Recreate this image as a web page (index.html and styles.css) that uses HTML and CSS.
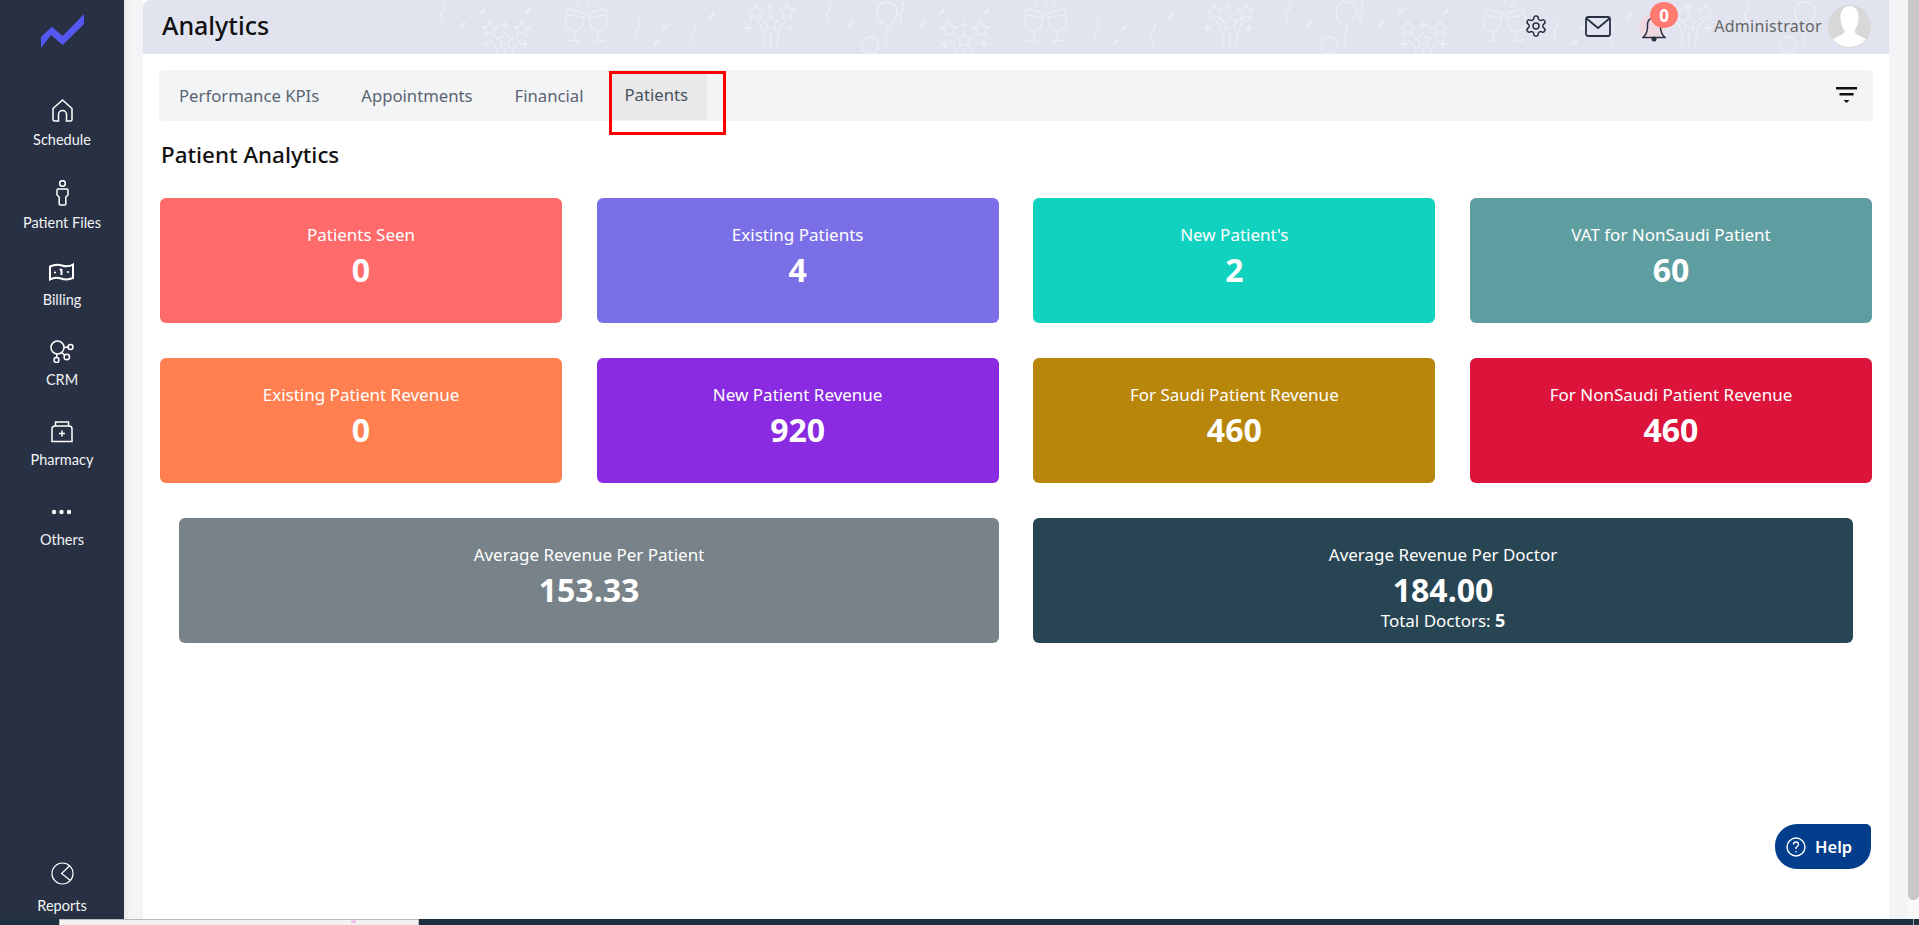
FILE: index.html
```html
<!DOCTYPE html>
<html lang="en">
  <head>
    <meta charset="UTF-8" />
    <meta name="viewport" content="width=device-width, initial-scale=1.0" />
    <title>Analytics</title>
    <link rel="stylesheet" href="styles.css">
  </head>
  <body>
    <div class="page">
      <!-- sidebar -->
      <aside class="sidebar">
        <svg class="logo" viewBox="0 0 43 34" width="43" height="34">
          <path d="M0 23 L10.700 12.700 L21.700 22 L43 0 V10 L21.700 31 L10 21 L0 34 Z" fill="#5558f0" />
        </svg>
        <nav class="side-nav">
          <a class="side-item schedule">
            <svg viewBox="0 0 21 23" width="21" height="23"><path d="M1 9.500 L10.500 1 L20 9.500 V20.500 Q20 22 18.500 22 H14.500 V15.500 A4 4 0 0 0 6.500 15.500 V22 H2.500 Q1 22 1 20.500 Z" /></svg>
            <span>Schedule</span>
          </a>
          <a class="side-item files">
            <svg viewBox="0 0 13 26" width="13" height="26"><circle cx="6.500" cy="3.500" r="2.800" /><path d="M2 9 H11 Q12 9 12 10.500 V15 L9.800 17 V24 Q9.800 25 8.800 25 H4.200 Q3.200 25 3.200 24 V17 L1 15 V10.500 Q1 9 2 9 Z" /></svg>
            <span>Patient Files</span>
          </a>
          <a class="side-item billing">
            <svg class="thick" viewBox="0 0 25 18" width="25" height="18"><path d="M1 3.500 Q7 .5 13 2.500 T24 1.500 V15 Q18 17.500 12 15.500 T1 16.500 Z" /><path d="M12.500 6 L10.800 7.300 M12.500 6 V12" /><circle class="solid" cx="6" cy="9.500" r="1.100" /><circle class="solid" cx="19" cy="9" r="1.100" /></svg>
            <span>Billing</span>
          </a>
          <a class="side-item crm">
            <svg viewBox="0 0 24 23" width="24" height="23"><circle cx="7.500" cy="7.500" r="6.500" /><circle cx="20.500" cy="7" r="2.500" /><circle cx="16.800" cy="17" r="2.700" /><circle cx="6.500" cy="20" r="2.500" /><path d="M14 7.500 L18 7 M11.500 12.500 L14.800 15.200 M7 14 L6.500 17.500" /></svg>
            <span>CRM</span>
          </a>
          <a class="side-item pharmacy">
            <svg viewBox="0 0 22 22" width="22" height="22"><path d="M4.500 5 V1 H17.500 V5" /><path d="M4 5 H18 Q21 5 21 8 V20.500 H1 V8 Q1 5 4 5 Z" /><path d="M11 9.500 V15.500 M8 12.500 H14" /></svg>
            <span>Pharmacy</span>
          </a>
          <a class="side-item others">
            <svg viewBox="0 0 21 6" width="21" height="6"><circle class="solid" cx="3" cy="3" r="2.200" /><circle class="solid" cx="10.500" cy="3" r="2.200" /><circle class="solid" cx="18" cy="3" r="2.200" /></svg>
            <span>Others</span>
          </a>
        </nav>
        <a class="side-item reports">
          <svg class="thin" viewBox="0 0 24 24" width="23" height="23"><circle cx="12" cy="12" r="11" /><path d="M19.500 3.900 L11 12 L20.300 19.300" /></svg>
          <span>Reports</span>
        </a>
      </aside>

      <main class="content">
        <header class="topbar">
          <h1>Analytics</h1>
          <svg class="confetti" width="1459" height="54" viewBox="0 0 1459 54">
            <defs>
              <path id="star" d="M0 -8 L2.400 -2.600 L8 -2.200 L3.800 1.400 L5 7 L0 4 L-5 7 L-3.800 1.400 L-8 -2.200 L-2.400 -2.600 Z" />
              <path id="leaf" class="leaf" d="M-3 3 Q-3 -2 2.500 -4 Q3.500 1 -3 3 Z" />
              <path id="squiggle" d="M1 0 Q5 4 1 9 Q-3 13 0 17 L1 22" />
              <path id="plus" d="M-4 0 H4 M0 -4 V4" />
              <g id="party">
                <use href="#squiggle" x="12" y="2" />
                <use href="#leaf" x="53" y="12" />
                <use href="#leaf" x="33" y="25" />
                <use href="#leaf" x="98" y="12" />
                <use href="#star" x="60" y="29" />
                <use href="#star" x="92" y="29" />
                <use href="#star" x="75" y="40" />
                <use href="#plus" x="56" y="44" />
                <use href="#plus" x="75" y="25" />
                <use href="#plus" x="95" y="44" />
                <path d="M60 40 Q67 46 68 54 M75 48 V54 M91 40 Q84 46 82 54" />
                <!-- glasses -->
                <path d="M138 9 L155 13 L152 26 Q149 33 142 31 Q135 29 135 22 Z M139 15 L154 18 M146 32 L144 41 M137 40 L150 42" />
                <path d="M158 13 L175 9 L178 22 Q178 29 171 31 Q164 33 161 26 Z M159 18 L174 15 M167 32 L169 41 M163 42 L176 40" />
                <path d="M150 5 L146 1 M157 4 V0 M163 5 L167 1" />
                <use href="#squiggle" x="207" y="20" />
                <use href="#leaf" x="235" y="28" />
                <use href="#leaf" x="227" y="43" />
                <use href="#leaf" x="282" y="16" />
                <use href="#squiggle" x="263" y="22" />
                <use href="#star" x="326" y="12" />
                <use href="#star" x="357" y="12" />
                <use href="#star" x="341" y="23" />
                <use href="#plus" x="340" y="7" />
                <use href="#plus" x="318" y="28" />
                <use href="#plus" x="360" y="28" />
                <path d="M326 20 Q336 28 334 46 M341 32 V50 M356 20 Q347 28 347 46" />
                <use href="#squiggle" x="398" y="2" />
                <use href="#leaf" x="420" y="25" />
                <!-- balloons -->
                <path d="M457 2 C465 2 468 8 467 13 C466 20 461 24 457 26 C452 24 447 20 447 13 C447 7 450 2 457 2 Z M457 26 C461 31 453 34 456 38 Q458 42 455 46" />
                <path d="M440 37 C446 37 449 42 448 47 C447 51 444 54 440 54 C436 54 432 51 432 46 C432 41 435 37 440 37 Z" />
              </g>
            </defs>
            <use href="#party" />
            <use href="#party" x="459" />
            <use href="#party" x="918" />
          </svg>
          <div class="top-actions">
            <svg class="top-icon" viewBox="0 0 24 24" width="24" height="24">
              <circle cx="12" cy="12" r="3" />
              <path d="M12.220 2h-.44a2 2 0 0 0-2 2v.18a2 2 0 0 1-1 1.730l-.43.25a2 2 0 0 1-2 0l-.15-.08a2 2 0 0 0-2.730.73l-.22.38a2 2 0 0 0 .73 2.730l.15.1a2 2 0 0 1 1 1.720v.51a2 2 0 0 1-1 1.740l-.15.09a2 2 0 0 0-.73 2.730l.22.38a2 2 0 0 0 2.730.73l.15-.08a2 2 0 0 1 2 0l.43.25a2 2 0 0 1 1 1.730V20a2 2 0 0 0 2 2h.44a2 2 0 0 0 2-2v-.18a2 2 0 0 1 1-1.730l.43-.25a2 2 0 0 1 2 0l.15.08a2 2 0 0 0 2.730-.73l.22-.39a2 2 0 0 0-.73-2.730l-.15-.08a2 2 0 0 1-1-1.740v-.5a2 2 0 0 1 1-1.740l.15-.09a2 2 0 0 0 .73-2.730l-.22-.38a2 2 0 0 0-2.730-.73l-.15.08a2 2 0 0 1-2 0l-.43-.25a2 2 0 0 1-1-1.730V4a2 2 0 0 0-2-2z" />
            </svg>
            <svg class="top-icon mail" viewBox="0 0 26 21" width="26" height="21">
              <rect x="1" y="1" width="24" height="19" rx="2" />
              <path d="M1.500 2.500 L13 12 L24.500 2.500" />
            </svg>
            <div class="bell-wrap">
              <span class="bell-halo"></span>
              <svg class="top-icon bell" viewBox="0 0 24 26" width="24" height="26">
                <path d="M1 21.500 Q5 18 5.500 12 V8 Q6 2 12 2 Q18 2 18.500 8 V12 Q19 18 23 21.500 Z" />
                <circle class="solid" cx="12" cy="23" r="2.500" />
              </svg>
              <span class="badge">0</span>
            </div>
            <span class="user-name">Administrator</span>
            <svg class="avatar" viewBox="0 0 44 44" width="43" height="43">
              <circle cx="22" cy="22" r="22" fill="#d8d8d8" />
              <path d="M22 1 C30 1 32 9 31 16 C30.500 21 28 24 27 27 C29 31 35 32 39 35 A22 22 0 0 1 5 35 C9 32 15 31 17 27 C16 24 13.500 21 13 16 C12 9 14 1 22 1 Z" fill="#fff" />
            </svg>
          </div>
        </header>

        <div class="body">
          <div class="tabbar">
            <a class="tab">Performance KPIs</a>
            <a class="tab">Appointments</a>
            <a class="tab">Financial</a>
            <a class="tab active">Patients</a>
            <svg class="filter" viewBox="0 0 21 16" width="21" height="16">
              <rect x="0" y="0" width="21" height="2.500" />
              <rect x="3.500" y="6" width="14" height="2.500" />
              <path d="M7.500 13 H13.500 L10.500 16 Z" />
            </svg>
          </div>

          <h2>Patient Analytics</h2>

          <div class="stat-grid">
            <div class="stat coral"><p>Patients Seen</p><b>0</b></div>
            <div class="stat slate"><p>Existing Patients</p><b>4</b></div>
            <div class="stat teal"><p>New Patient's</p><b>2</b></div>
            <div class="stat cadet"><p>VAT for NonSaudi Patient</p><b>60</b></div>
            <div class="stat orange"><p>Existing Patient Revenue</p><b>0</b></div>
            <div class="stat violet"><p>New Patient Revenue</p><b>920</b></div>
            <div class="stat gold"><p>For Saudi Patient Revenue</p><b>460</b></div>
            <div class="stat crimson"><p>For NonSaudi Patient Revenue</p><b>460</b></div>
          </div>

          <div class="stat-wide">
            <div class="stat grey"><p>Average Revenue Per Patient</p><b>153.33</b></div>
            <div class="stat navy"><p>Average Revenue Per Doctor</p><b>184.00</b><small>Total Doctors: <strong>5</strong></small></div>
          </div>
        </div>

        <button class="help">
          <svg viewBox="0 0 20 20" width="20" height="20">
            <circle cx="10" cy="10" r="9" />
            <path d="M7.500 7.500 Q7.500 5 10 5 Q12.500 5 12.500 7.500 Q12.500 9 10 10.500 V12" />
            <circle class="dot" cx="10" cy="14.800" r=".8" />
          </svg>
          Help
        </button>
      </main>

      <div class="scrollbar"><span class="thumb"></span></div>
    </div>

    <!-- window behind the page -->
    <div class="taskstrip"><span class="strip-window"><i class="pink-dot"></i></span></div>
  </body>
</html>
```

FILE: styles.css
```css
* {
  box-sizing: border-box;
}

html,
body {
  height: 100%;
  margin: 0;
  overflow: hidden;
}

body {
  font-family: "Noto Sans", Lato, Arial, sans-serif;
  background-color: #f3f4f6;
  color: #1c1c1c;
  display: flex;
  flex-direction: column;
}

.page {
  display: flex;
  height: 919px;
}

/* sidebar */
.sidebar {
  width: 124px;
  flex-shrink: 0;
  background-color: #283143;
  color: #f2f3f5;
  display: flex;
  flex-direction: column;
  align-items: center;
  font-family: Lato, Arial, sans-serif;
  font-size: 14.500px;
  padding: 14px 0 4px;
  box-shadow: 3px 0 6px rgba(0, 0, 0, 0.05);
}

.logo {
  flex-shrink: 0;
}

.side-nav {
  display: flex;
  flex-direction: column;
  align-items: center;
  flex: 1;
  padding-top: 51px;
}

.side-item {
  display: flex;
  flex-direction: column;
  align-items: center;
  white-space: nowrap;
}

.side-item svg {
  fill: none;
  stroke: #fff;
  stroke-width: 1.500;
}

.side-item svg.thick {
  stroke-width: 2;
}

.side-item svg.thin {
  stroke-width: 1.200;
}

.side-item svg .solid {
  fill: #fff;
  stroke: none;
}

.side-item span {
  line-height: 18px;
}

.schedule span {
  margin-top: 9px;
}

.files {
  margin-top: 31px;
}

.files span {
  margin-top: 8px;
}

.billing {
  margin-top: 31px;
}

.billing span {
  margin-top: 10px;
}

.crm {
  margin-top: 31px;
}

.crm span {
  margin-top: 8px;
}

.pharmacy {
  margin-top: 32px;
}

.pharmacy span {
  margin-top: 8px;
}

.others {
  margin-top: 40px;
}

.others span {
  margin-top: 16px;
}

.reports span {
  margin-top: 12px;
}

/* main area */
.content {
  width: 1746px;
  margin-left: 19px;
  background-color: #fff;
  position: relative;
  flex-shrink: 0;
}

.topbar {
  height: 54px;
  background-color: #e1e4ee;
  border-top-left-radius: 8px;
  display: flex;
  align-items: center;
  padding: 0 18px 2px 19px;
  position: relative;
  overflow: hidden;
}

.topbar h1 {
  font-size: 25px;
  font-weight: 500;
  margin: 0 0 2px;
  color: #111;
  position: relative;
}

.confetti {
  position: absolute;
  left: 287px;
  top: 0;
  fill: none;
  stroke: #eceef4;
  stroke-width: 1.300;
}

.confetti .leaf {
  fill: #eceef4;
  stroke: none;
}

.top-actions {
  margin-left: auto;
  display: flex;
  align-items: center;
  position: relative;
}

.top-icon {
  fill: none;
  stroke: #283143;
  stroke-width: 1.500;
}

.mail {
  margin-left: 37px;
  stroke-width: 1.800;
}

.bell-wrap {
  margin-left: 31px;
  width: 24px;
  height: 26px;
  margin-top: 6px;
  position: relative;
}

.bell-wrap .solid {
  fill: #283143;
  stroke: none;
}

.bell-halo {
  position: absolute;
  left: -3px;
  top: -2px;
  width: 26px;
  height: 26px;
  border-radius: 50%;
  background-color: #f3d3d8;
  opacity: 0.7;
}

.bell {
  position: relative;
  display: block;
}

.badge {
  position: absolute;
  left: 8px;
  top: -14px;
  width: 28px;
  height: 26px;
  border-radius: 50%;
  background-color: #ff7a70;
  color: #fff;
  font-size: 17px;
  font-weight: 700;
  display: flex;
  align-items: center;
  justify-content: center;
}

.user-name {
  margin-left: 48px;
  font-size: 16px;
  color: #666;
  letter-spacing: 0.3px;
}

.avatar {
  margin-left: 6px;
}

.body {
  padding: 16px 16px 0;
}

.tabbar {
  height: 51px;
  background-color: #f3f4f6;
  border-radius: 5px;
  display: flex;
  align-items: flex-start;
  position: relative;
}

.tab {
  font-size: 16.700px;
  line-height: 51px;
  height: 51px;
  padding: 0 21px;
  color: #5a6472;
}

.tab:first-child {
  padding-left: 20px;
}

.tab.active {
  background-color: #e9e9ea;
  color: #4a5360;
  padding: 0 19px 0 13px;
  margin-left: 7px;
  height: 50px;
  line-height: 50px;
  position: relative;
}

/* the red marker drawn over the screenshot */
.tab.active::after {
  content: "";
  position: absolute;
  left: -2px;
  top: 1px;
  width: 117px;
  height: 64px;
  border: 3px solid #f00;
  box-sizing: border-box;
}

.filter {
  position: absolute;
  right: 16px;
  top: 17px;
  fill: #111;
}

h2 {
  font-size: 22.400px;
  font-weight: 500;
  margin: 19px 0 0 2px;
  line-height: 30px;
  color: #111;
}

.stat-grid {
  display: grid;
  grid-template-columns: repeat(4, 402px);
  gap: 35px 34.660px;
  margin: 28px 0 0 1px;
}

.stat-wide {
  display: grid;
  grid-template-columns: 820px 820px;
  gap: 34px;
  margin: 35px 0 0 20px;
}

.stat {
  height: 125px;
  border-radius: 6px;
  color: #fff;
  text-align: center;
  padding-top: 24px;
}

.stat p {
  margin: 0;
  font-size: 17px;
  line-height: 26px;
}

.stat b {
  display: block;
  font-size: 32px;
  font-weight: 700;
  line-height: 44px;
}

.stat small {
  display: block;
  font-size: 17px;
  line-height: 22px;
  margin-top: -3px;
}

.stat small strong {
  font-weight: 700;
  font-size: 18px;
}

.coral { background-color: #ff6b6b; }
.slate { background-color: #7b6fe8; }
.teal { background-color: #11d2bf; }
.cadet { background-color: #5f9ea0; }
.orange { background-color: #ff7f50; }
.violet { background-color: #8a2be2; }
.gold { background-color: #b8860b; }
.crimson { background-color: #dc143c; }
.grey { background-color: #778389; }
.navy { background-color: #284554; }

.help {
  position: absolute;
  right: 18px;
  top: 824px;
  width: 96px;
  height: 45px;
  border: none;
  border-radius: 22px 5px 22px 22px;
  background-color: #033e8c;
  color: #fff;
  font-family: inherit;
  font-size: 16.500px;
  font-weight: 600;
  display: flex;
  align-items: center;
  padding: 0 0 0 11px;
  gap: 9px;
}

.help svg {
  fill: none;
  stroke: #fff;
  stroke-width: 1.400;
}

.help .dot {
  fill: #fff;
  stroke: none;
}

/* scrollbar */
.scrollbar {
  margin-left: 19px;
  width: 11px;
  background-color: #fafafa;
}

.thumb {
  display: block;
  height: 900px;
  background-color: #c8c8c8;
  border-radius: 0 0 6px 6px;
}

.taskstrip {
  height: 6px;
  background-color: #1e3040;
  position: relative;
}

.taskstrip::after {
  content: "";
  position: absolute;
  left: 1913px;
  top: 0;
  width: 1px;
  height: 6px;
  background-color: #9aa3ad;
}

.strip-window {
  position: absolute;
  left: 59px;
  top: 0;
  width: 360px;
  height: 6px;
  background-color: #f2f2f2;
  border: 1px solid #b9b9b9;
  border-bottom: none;
}

.pink-dot {
  position: absolute;
  left: 291px;
  top: 0;
  width: 5px;
  height: 3px;
  border-radius: 3px 3px 0 0;
  background-color: #f6b8e8;
}
```
